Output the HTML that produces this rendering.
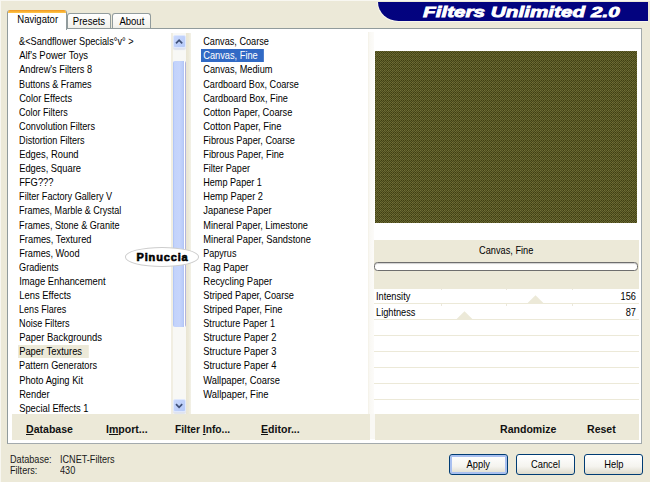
<!DOCTYPE html>
<html><head><meta charset="utf-8"><title>Filters Unlimited 2.0</title>
<style>
*{margin:0;padding:0;box-sizing:border-box}
html,body{width:650px;height:482px;overflow:hidden;background:#ece9d8}
body{position:relative;font-family:"Liberation Sans",sans-serif;font-size:11px;color:#000;}
.abs{position:absolute}
.it{position:absolute;height:14px;line-height:14px;white-space:nowrap;padding:0 6.5px 0 2.6px;font-size:10.6px;transform:scaleX(.87);transform-origin:0 0}
.selb{background:linear-gradient(#316ac5,#316ac5) no-repeat 0 0.4px;color:#fff}
.selg{background:linear-gradient(#ece9d8,#ece9d8) no-repeat 0 0.6px}
.lf{padding-left:1.3px !important;padding-right:7.8px !important}
.panel{position:absolute;left:7px;top:28px;width:635px;height:416px;background:#fff;border:1px solid #919b9c;border-right-color:#a3aaad;border-bottom-color:#a3aaad}
.tab{position:absolute;top:12.5px;height:16.5px;border:1px solid #919b9c;border-bottom:none;border-radius:3px 3px 0 0;background:linear-gradient(#fff,#f4f3ee 80%,#ecebe3);text-align:center;line-height:15px;font-size:10.6px}
.tabsel{position:absolute;left:7px;top:10px;width:60px;height:20px;border:1px solid #919b9c;border-bottom:none;border-top:none;border-radius:3px 3px 0 0;background:#fff;text-align:center;line-height:19px;font-size:10.6px;overflow:hidden}
.tabsel:before{content:"";position:absolute;left:0;right:0;top:0;height:3px;background:linear-gradient(#f0961e,#ffc84a);}
.beige{background:#ece9d8;position:absolute}
.btxt{position:absolute;font-weight:bold;font-size:11px;line-height:14px;white-space:nowrap;color:#111;transform:scaleX(.96);transform-origin:0 0}
.btn{position:absolute;top:454px;height:21px;width:59px;border:1px solid #003c74;border-radius:3px;background:linear-gradient(#fff,#f5f4ef 60%,#dddacb);text-align:center;line-height:19px;font-size:10.6px}
.sline{position:absolute;left:374px;width:265px;height:1.3px;background:#ece9d8}
u{text-decoration:underline}
.ps{position:absolute;font-size:10.6px;line-height:14px;white-space:nowrap;transform:scaleX(.87);transform-origin:0 0}
.st{position:absolute;font-size:10.3px;line-height:12px;white-space:nowrap;color:#1a1a1a;transform:scaleX(.885);transform-origin:0 0}
.sx{display:inline-block;transform:scaleX(.9);transform-origin:50% 50%}
</style></head><body>
<div class="abs" style="left:0;top:0;width:650px;height:1px;background:#f8f7f1"></div><div class="abs" style="left:0;top:0;width:1px;height:482px;background:#f8f7f1"></div>
<!-- banner -->
<div class="abs" style="left:378px;top:1.7px;width:270px;height:19.1px;background:#03037f;border-radius:0 0 0 20.5px/0 0 0 19px;box-shadow:-0.6px 0.6px 0 0.4px #f7f5ec"></div>
<div class="abs" style="left:423px;top:1.5px;height:19px;line-height:19px;color:#fff;font-weight:bold;font-style:italic;font-size:15px;white-space:nowrap;transform:scaleX(1.38);transform-origin:0 0;-webkit-text-stroke:0.8px #fff">Filters Unlimited 2.0</div>

<!-- tabs -->
<div class="tab" style="left:67px;width:44px"><span class="sx">Presets</span></div>
<div class="tab" style="left:112px;width:39px"><span class="sx">About</span></div>
<div class="panel"></div>
<div class="tabsel" style="padding-left:2px"><span class="sx">Navigator</span></div>

<!-- beige frame pieces -->
<div class="abs" style="left:171px;top:33px;width:1.5px;height:381px;background:#f1eee2"></div>
<div class="beige" style="left:186.3px;top:33px;width:4.7px;height:381px;background:linear-gradient(90deg,#e9e5d3,#ece9d8 50%,#f3f1e8)"></div>
<div class="beige" style="left:12px;top:414px;width:357.5px;height:26px"></div>
<div class="abs" style="left:368px;top:32px;width:6px;height:382px;background:linear-gradient(90deg,#f4f1e7,#f9f8f4 30%,#fcfbf9)"></div>
<div class="abs" style="left:369.5px;top:414px;width:5px;height:25px;background:#f9f8f4"></div>
<div class="beige" style="left:374.5px;top:414px;width:264.5px;height:26px"></div>
<div class="beige" style="left:374px;top:240px;width:265px;height:48.6px"></div>

<!-- scrollbar -->
<div class="abs" style="left:172.5px;top:33px;width:13.5px;height:381px;background:#f8f8f5"></div>
<div class="abs" style="left:172.5px;top:34.7px;width:13px;height:13.3px;background:linear-gradient(135deg,#c9d8fd,#b5c9f8);border:1px solid #dfe8fd;border-radius:2px;box-shadow:0 1.5px 1px #dfe3ee"></div>
<svg class="abs" style="left:172.5px;top:34.7px" width="13" height="13.3" viewBox="0 0 13 13.3"><path d="M3 8.4 L6.1 5.2 L9.2 8.4" fill="none" stroke="#3f5078" stroke-width="1.7"/></svg>
<div class="abs" style="left:172.5px;top:60.5px;width:13.7px;height:266px;border-radius:2px;background:linear-gradient(90deg,#a9c0f5 0,#c3d3fb 12%,#c6d5fc 50%,#b9cbf8 78%,#a8bdf3 85%,#fff 87%,#fff 93%,#b3b4dc 94%,#b3b4dc 100%)"></div>
<div class="abs" style="left:172.5px;top:399px;width:13px;height:13.3px;background:linear-gradient(135deg,#c9d8fd,#b5c9f8);border:1px solid #dfe8fd;border-radius:2px;box-shadow:0 1.5px 1px #dfe3ee"></div>
<svg class="abs" style="left:172.5px;top:399px" width="13" height="13.3" viewBox="0 0 13 13.3"><path d="M3 5.2 L6.1 8.4 L9.2 5.2" fill="none" stroke="#3f5078" stroke-width="1.7"/></svg>

<!-- lists -->
<div class="it lf" style="left:17.5px;top:34.30px;transform:scaleX(0.866)">&amp;&lt;Sandflower Specials°v° &gt;</div>
<div class="it lf" style="left:17.5px;top:48.39px;transform:scaleX(0.893)">Alf's Power Toys</div>
<div class="it lf" style="left:17.5px;top:62.49px;transform:scaleX(0.869)">Andrew's Filters 8</div>
<div class="it lf" style="left:17.5px;top:76.59px;transform:scaleX(0.854)">Buttons &amp; Frames</div>
<div class="it lf" style="left:17.5px;top:90.68px;transform:scaleX(0.875)">Color Effects</div>
<div class="it lf" style="left:17.5px;top:104.78px;transform:scaleX(0.85)">Color Filters</div>
<div class="it lf" style="left:17.5px;top:118.87px;transform:scaleX(0.865)">Convolution Filters</div>
<div class="it lf" style="left:17.5px;top:132.97px;transform:scaleX(0.855)">Distortion Filters</div>
<div class="it lf" style="left:17.5px;top:147.06px;transform:scaleX(0.885)">Edges, Round</div>
<div class="it lf" style="left:17.5px;top:161.16px;transform:scaleX(0.883)">Edges, Square</div>
<div class="it lf" style="left:17.5px;top:175.25px;transform:scaleX(0.885)">FFG???</div>
<div class="it lf" style="left:17.5px;top:189.35px;transform:scaleX(0.858)">Filter Factory Gallery V</div>
<div class="it lf" style="left:17.5px;top:203.44px;transform:scaleX(0.85)">Frames, Marble &amp; Crystal</div>
<div class="it lf" style="left:17.5px;top:217.54px;transform:scaleX(0.857)">Frames, Stone &amp; Granite</div>
<div class="it lf" style="left:17.5px;top:231.63px;transform:scaleX(0.88)">Frames, Textured</div>
<div class="it lf" style="left:17.5px;top:245.73px;transform:scaleX(0.872)">Frames, Wood</div>
<div class="it lf" style="left:17.5px;top:259.82px;transform:scaleX(0.858)">Gradients</div>
<div class="it lf" style="left:17.5px;top:273.92px;transform:scaleX(0.884)">Image Enhancement</div>
<div class="it lf" style="left:17.5px;top:288.01px;transform:scaleX(0.893)">Lens Effects</div>
<div class="it lf" style="left:17.5px;top:302.11px;transform:scaleX(0.85)">Lens Flares</div>
<div class="it lf" style="left:17.5px;top:316.20px;transform:scaleX(0.856)">Noise Filters</div>
<div class="it lf" style="left:17.5px;top:330.30px;transform:scaleX(0.891)">Paper Backgrounds</div>
<div class="it lf selg" style="left:17.5px;top:344.39px;transform:scaleX(0.885)">Paper Textures</div>
<div class="it lf" style="left:17.5px;top:358.49px;transform:scaleX(0.865)">Pattern Generators</div>
<div class="it lf" style="left:17.5px;top:372.58px;transform:scaleX(0.882)">Photo Aging Kit</div>
<div class="it lf" style="left:17.5px;top:386.68px;transform:scaleX(0.875)">Render</div>
<div class="it lf" style="left:17.5px;top:400.77px;transform:scaleX(0.882)">Special Effects 1</div>
<div class="it" style="left:201px;top:34.30px;transform:scaleX(0.865)">Canvas, Coarse</div>
<div class="it selb" style="left:201px;top:48.39px;transform:scaleX(0.873)">Canvas, Fine</div>
<div class="it" style="left:201px;top:62.49px;transform:scaleX(0.871)">Canvas, Medium</div>
<div class="it" style="left:201px;top:76.59px;transform:scaleX(0.86)">Cardboard Box, Coarse</div>
<div class="it" style="left:201px;top:90.68px;transform:scaleX(0.866)">Cardboard Box, Fine</div>
<div class="it" style="left:201px;top:104.78px;transform:scaleX(0.875)">Cotton Paper, Coarse</div>
<div class="it" style="left:201px;top:118.87px;transform:scaleX(0.885)">Cotton Paper, Fine</div>
<div class="it" style="left:201px;top:132.97px;transform:scaleX(0.865)">Fibrous Paper, Coarse</div>
<div class="it" style="left:201px;top:147.06px;transform:scaleX(0.873)">Fibrous Paper, Fine</div>
<div class="it" style="left:201px;top:161.16px;transform:scaleX(0.853)">Filter Paper</div>
<div class="it" style="left:201px;top:175.25px;transform:scaleX(0.859)">Hemp Paper 1</div>
<div class="it" style="left:201px;top:189.35px;transform:scaleX(0.874)">Hemp Paper 2</div>
<div class="it" style="left:201px;top:203.44px;transform:scaleX(0.884)">Japanese Paper</div>
<div class="it" style="left:201px;top:217.54px;transform:scaleX(0.871)">Mineral Paper, Limestone</div>
<div class="it" style="left:201px;top:231.63px;transform:scaleX(0.883)">Mineral Paper, Sandstone</div>
<div class="it" style="left:201px;top:245.73px;transform:scaleX(0.854)">Papyrus</div>
<div class="it" style="left:201px;top:259.82px;transform:scaleX(0.892)">Rag Paper</div>
<div class="it" style="left:201px;top:273.92px;transform:scaleX(0.891)">Recycling Paper</div>
<div class="it" style="left:201px;top:288.01px;transform:scaleX(0.87)">Striped Paper, Coarse</div>
<div class="it" style="left:201px;top:302.11px;transform:scaleX(0.873)">Striped Paper, Fine</div>
<div class="it" style="left:201px;top:316.20px;transform:scaleX(0.864)">Structure Paper 1</div>
<div class="it" style="left:201px;top:330.30px;transform:scaleX(0.882)">Structure Paper 2</div>
<div class="it" style="left:201px;top:344.39px;transform:scaleX(0.882)">Structure Paper 3</div>
<div class="it" style="left:201px;top:358.49px;transform:scaleX(0.882)">Structure Paper 4</div>
<div class="it" style="left:201px;top:372.58px;transform:scaleX(0.884)">Wallpaper, Coarse</div>
<div class="it" style="left:201px;top:386.68px;transform:scaleX(0.89)">Wallpaper, Fine</div>

<!-- watermark -->
<div class="abs" style="left:125px;top:247px;width:74px;height:19.5px;border-radius:50%;background:#fff;border:1px solid #cdcdcd"></div>
<div class="abs" style="left:125px;top:247px;width:74px;height:19px;line-height:19px;text-align:center;font-weight:bold;font-size:11px;letter-spacing:0.85px;text-indent:1px;padding-top:0.8px;color:#000;-webkit-text-stroke:0.6px #000">Pinuccia</div>

<!-- bottom buttons text -->
<div class="btxt" style="left:26px;top:422px"><u>D</u>atabase</div>
<div class="btxt" style="left:106px;top:422px">I<u>m</u>port...</div>
<div class="btxt" style="left:175px;top:422px;transform:scaleX(.93)">Filter <u>I</u>nfo...</div>
<div class="btxt" style="left:261px;top:422px"><u>E</u>ditor...</div>
<div class="btxt" style="left:500px;top:422px">Randomize</div>
<div class="btxt" style="left:587px;top:422px">Reset</div>

<!-- preview -->
<svg class="abs" style="left:375px;top:51px" width="262" height="171.5" shape-rendering="crispEdges">
<defs><pattern id="p" width="4" height="4" patternUnits="userSpaceOnUse"><rect x="0" y="0" width="1" height="1" fill="#6f6e33"/><rect x="1" y="0" width="1" height="1" fill="#4b4a1f"/><rect x="2" y="0" width="1" height="1" fill="#68672d"/><rect x="3" y="0" width="1" height="1" fill="#44431a"/><rect x="0" y="1" width="1" height="1" fill="#3a390e"/><rect x="1" y="1" width="1" height="1" fill="#68672d"/><rect x="2" y="1" width="1" height="1" fill="#3a390e"/><rect x="3" y="1" width="1" height="1" fill="#68672d"/><rect x="0" y="2" width="1" height="1" fill="#68672d"/><rect x="1" y="2" width="1" height="1" fill="#44431a"/><rect x="2" y="2" width="1" height="1" fill="#68672d"/><rect x="3" y="2" width="1" height="1" fill="#44431a"/><rect x="0" y="3" width="1" height="1" fill="#3a390e"/><rect x="1" y="3" width="1" height="1" fill="#757437"/><rect x="2" y="3" width="1" height="1" fill="#4b4a1f"/><rect x="3" y="3" width="1" height="1" fill="#6f6e33"/></pattern></defs>
<rect width="262" height="172" fill="#58572a"/><rect width="262" height="172" fill="url(#p)" opacity="0.85"/></svg>

<!-- label + progress -->
<div class="abs" style="left:374px;top:243px;width:264px;height:14px;line-height:14px;text-align:center;font-size:10.6px"><span class="sx" style="transform:scaleX(.87)">Canvas, Fine</span></div>
<div class="abs" style="left:374px;top:261.5px;width:264px;height:9.5px;border:1.3px solid #6e6e6e;border-radius:3.5px;background:#fff;box-shadow:inset 0 1px 1px #d0d0d0"></div>

<!-- params -->
<div class="ps" style="left:376px;top:289.3px">Intensity</div>
<div class="ps" style="left:600px;top:289.3px;width:36px;text-align:right;transform-origin:100% 0">156</div>
<div class="ps" style="left:376px;top:305.3px">Lightness</div>
<div class="ps" style="left:600px;top:305.3px;width:36px;text-align:right;transform-origin:100% 0">87</div>
<div class="sline" style="top:303px"></div>
<div class="sline" style="top:319px"></div>
<div class="sline" style="top:335px"></div>
<div class="sline" style="top:351px"></div>
<div class="sline" style="top:367.2px"></div>
<div class="sline" style="top:383.2px"></div>
<div class="sline" style="top:399px"></div>
<div class="abs" style="left:440.5px;top:288px;width:1px;height:2px;background:#ebe8db"></div>
<div class="abs" style="left:506px;top:288px;width:1px;height:2px;background:#ebe8db"></div>
<div class="abs" style="left:571.5px;top:288px;width:1px;height:2px;background:#ebe8db"></div>
<div class="abs" style="left:440.5px;top:304px;width:1px;height:2px;background:#ebe8db"></div>
<div class="abs" style="left:506px;top:304px;width:1px;height:2px;background:#ebe8db"></div>
<div class="abs" style="left:571.5px;top:304px;width:1px;height:2px;background:#ebe8db"></div>
<svg class="abs" style="left:526.7px;top:295.2px" width="17" height="8.3"><path d="M0.3 8.3 L8.5 0.3 L16.7 8.3 Z" fill="#ece9d8"/></svg>
<svg class="abs" style="left:455.5px;top:311.2px" width="17" height="8.3"><path d="M0.3 8.3 L8.5 0.3 L16.7 8.3 Z" fill="#ece9d8"/></svg>

<!-- status -->
<div class="st" style="left:10px;top:453.5px">Database:</div>
<div class="st" style="left:59.5px;top:453.5px">ICNET-Filters</div>
<div class="st" style="left:10px;top:464.8px">Filters:</div>
<div class="st" style="left:59.5px;top:464.8px">430</div>

<!-- buttons -->
<div class="btn" style="left:449px;box-shadow:inset 0 0 0 2px #a9c0f0"><span class="sx" style="transform:scaleX(.88)">Apply</span></div>
<div class="btn" style="left:516px"><span class="sx" style="transform:scaleX(.88)">Cancel</span></div>
<div class="btn" style="left:584px"><span class="sx" style="transform:scaleX(.88)">Help</span></div>
</body></html>
